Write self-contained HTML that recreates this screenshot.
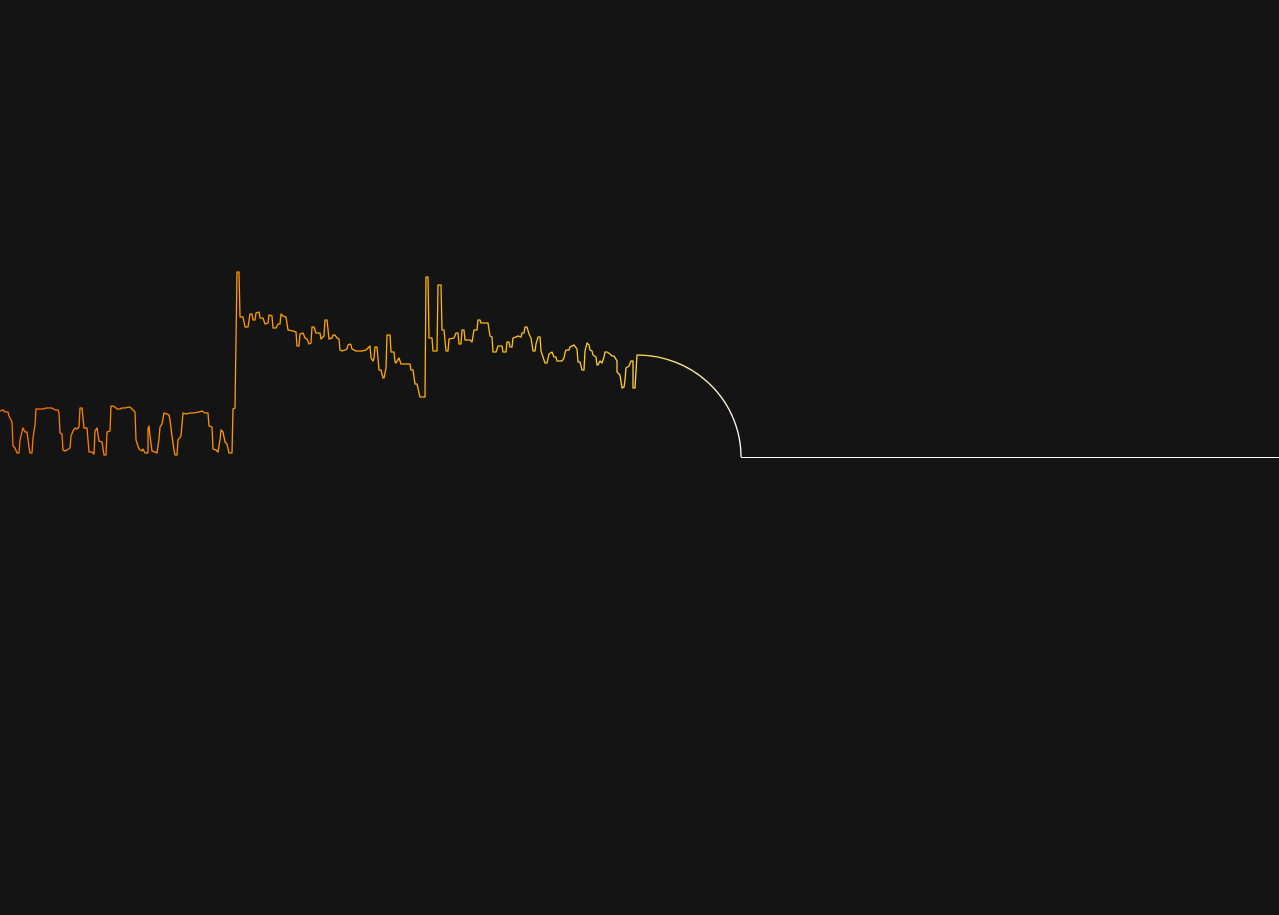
<!DOCTYPE html>
<html><head><style>html,body{margin:0;padding:0;background:#141414;}svg{display:block}</style></head>
<body>
<svg width="1279" height="915" viewBox="0 0 1279 915" xmlns="http://www.w3.org/2000/svg">
<defs>
<linearGradient id="g" gradientUnits="userSpaceOnUse" x1="0" y1="0" x2="745" y2="0">
<stop offset="0" stop-color="#ff7300"/>
<stop offset="0.32" stop-color="#ff9a00"/>
<stop offset="0.6" stop-color="#ffb400"/>
<stop offset="0.85" stop-color="#ffd23a"/>
<stop offset="1" stop-color="#ffffff"/>
</linearGradient>
</defs>
<path fill="none" stroke="url(#g)" stroke-width="1.3" stroke-linejoin="round" d="M0,411 L3,410 5,412 8,412 9,416 12,422 13,446 15,448 17,453 19,453 20,440 23,428 25,432 27,432 29,447 30,453 32,453 33,438 35,425 36,409 40,409 43,409 46,408 49,408 52,408 55,410 58,410 59,413 60,433 62,434 63,450 65,451 67,450 70,448 71,436 73,431 75,428 77,429 79,427 80,408 82,408 84,428 87,428 89,452 92,452 94,454 95,431 97,428 99,441 102,442 104,455 106,455 107,432 110,431 111,406 113,406 115,407 117,409 120,409 122,408 125,408 129,407 131,408 133,410 135,412 136,440 139,449 142,451 143,449 145,453 148,453 148,429 149,426 150,436 152,451 155,452 157,453 159,439 160,427 162,424 164,413 167,414 169,415 170,420 172,436 174,450 175,455 177,455 178,440 181,436 183,413 186,414 190,413 193,413 199,412 202,411 205,413 208,413 209,426 212,427 213,449 216,450 218,452 220,440 221,430 223,432 225,442 227,444 229,453 232,453 233,409 235,408 237,272 239,272 240,317 243,317 245,327 248,327 250,314 252,314 253,320 255,320 256,313 259,312 260,318 263,318 265,324 268,323 269,315 272,316 273,328 276,328 278,324 280,324 281,314 283,316 286,317 288,330 293,331 296,332 297,346 299,346 300,334 303,333 305,338 307,339 309,344 311,343 312,327 314,327 316,333 320,333 321,339 324,336 325,320 327,320 329,339 332,338 333,335 335,335 337,338 339,339 340,350 342,351 345,350 347,349 348,345 350,344 351,345 352,349 354,350 356,351 362,351 366,350 367,349 370,346 371,358 373,361 374,358 375,347 377,347 379,370 381,370 383,378 384,378 386,368 387,335 390,335 391,352 394,352 395,362 396,363 399,358 401,364 410,364 411,370 413,370 415,384 417,384 419,393 420,397 425,397 426,277 428,277 429,338 432,338 433,351 437,351 438,285 441,285 442,330 444,330 446,351 448,351 449,339 454,338 456,333 458,333 459,344 461,344 462,330 464,330 465,340 470,340 472,342 474,330 477,330 478,320 480,320 481,323 488,323 490,336 492,337 493,352 496,352 498,346 502,346 503,352 506,352 507,342 509,342 510,347 512,347 513,338 516,337 518,336 521,337 522,333 524,333 525,327 527,327 529,334 531,338 533,351 535,351 536,344 538,337 540,337 541,351 545,363 547,363 549,354 552,352 554,357 556,357 557,361 562,361 564,358 565,353 566,350 569,350 570,347 572,346 574,345 577,349 578,362 580,362 582,370 584,370 585,351 587,343 589,345 590,350 592,351 593,355 596,357 597,365 598,365 600,361 602,363 604,357 605,352 607,352 610,354 612,356 614,356 617,361 617,372 620,375 622,388 624,387 625,380 626,368 629,366 631,361 633,361 633,388 635,388 637,355 A104,102 0 0 1 741,457"/>
<line x1="741" y1="457.5" x2="1279" y2="457.5" stroke="#ffffff" stroke-width="1"/>
</svg>
</body></html>
